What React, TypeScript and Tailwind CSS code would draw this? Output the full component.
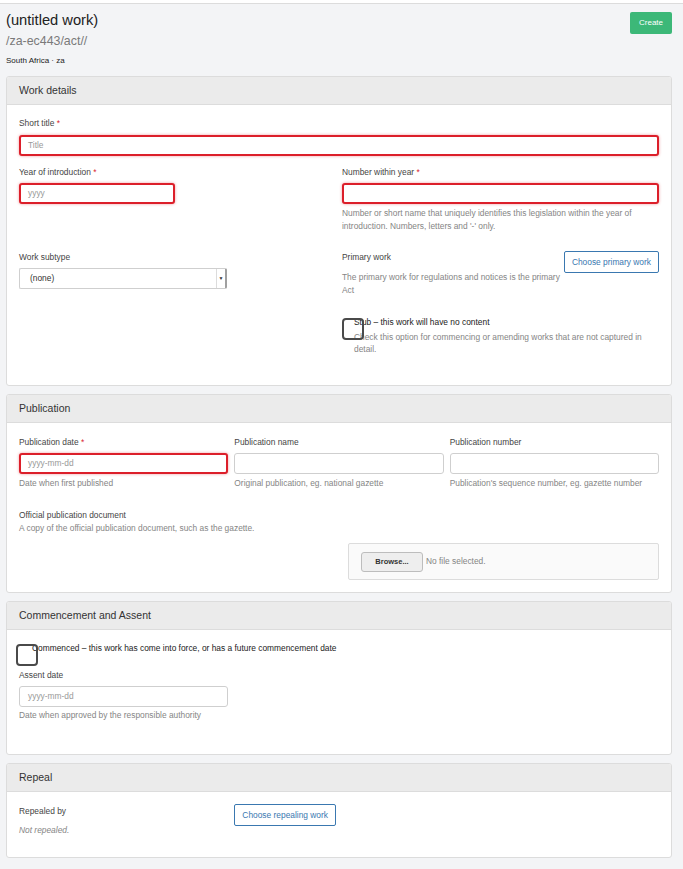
import React from "react";

const Req = () => <span className="text-[#d9232d]"> *</span>;

const Label = ({ children }: { children: React.ReactNode }) => (
  <div className="text-[8.4px] leading-[11px] text-[#444]">{children}</div>
);

const Help = ({ children }: { children: React.ReactNode }) => (
  <div className="text-[8.4px] leading-[13px] text-[#858585]">{children}</div>
);

const ErrInput = ({ placeholder, className = "" }: { placeholder?: string; className?: string }) => (
  <div
    className={`h-[21px] rounded-[3px] border-2 border-[#dc1f2a] bg-white shadow-[0_0_3px_rgba(220,30,40,0.45)] px-[7px] flex items-center text-[8.4px] text-[#999] ${className}`}
  >
    {placeholder}
  </div>
);

const Input = ({ placeholder, className = "" }: { placeholder?: string; className?: string }) => (
  <div
    className={`h-[21px] rounded-[3px] border border-[#cfcfcf] bg-white px-[8px] flex items-center text-[8.4px] text-[#999] ${className}`}
  >
    {placeholder}
  </div>
);

const Box = () => (
  <div className="absolute w-[22px] h-[22px] rounded-[4px] border-2 border-[#4a4a4a] bg-transparent" />
);

const Card = ({ title, children, className = "" }: { title: string; children: React.ReactNode; className?: string }) => (
  <div className="ml-[6px] mr-[11px] mb-[8px] rounded-[3px] border border-[#dcdcdc] bg-white overflow-hidden">
    <div className="h-[28px] bg-[#ebebeb] border-b border-[#dcdcdc] flex items-center px-[12px] text-[10.5px] text-[#333]">
      {title}
    </div>
    <div className={`px-[12px] ${className}`}>{children}</div>
  </div>
);

export default function App() {
  return (
    <div className="min-h-[869px] bg-[#f3f4f6] font-['Liberation_Sans',Arial,sans-serif] text-[#222]">
      <div className="h-[4px] bg-white border-b border-[#dcdcdc]" />

      <div className="flex justify-between pl-[6px] pr-[11px] pt-[7px] h-[72px]">
        <div>
          <div className="text-[14.7px] leading-[18px] text-[#222]">(untitled work)</div>
          <div className="mt-[5px] text-[12.4px] leading-[15px] text-[#7a7a7a]">/za-ec443/act//</div>
          <div className="mt-[7px] text-[8px] leading-[10px] text-[#222]">South Africa · za</div>
        </div>
        <div className="mt-[1px]">
          <div className="h-[22px] w-[42px] rounded-[2px] bg-[#3cb878] text-white text-[8px] flex items-center justify-center">
            Create
          </div>
        </div>
      </div>

      <Card title="Work details" className="pt-[13px] pb-[30px]">
        <Label>
          Short title<Req />
        </Label>
        <ErrInput placeholder="Title" className="mt-[6px]" />

        <div className="grid grid-cols-2 gap-x-[6px] mt-[11px]">
          <div>
            <Label>
              Year of introduction<Req />
            </Label>
            <ErrInput placeholder="yyyy" className="mt-[5px] w-[156px]" />
          </div>
          <div>
            <Label>
              Number within year<Req />
            </Label>
            <ErrInput className="mt-[5px]" />
            <div className="mt-[3px]">
              <Help>
                Number or short name that uniquely identifies this legislation within the year of introduction. Numbers,
                letters and '-' only.
              </Help>
            </div>
          </div>

          <div className="mt-[19px]">
            <Label>Work subtype</Label>
            <div className="mt-[5px] w-[208px] h-[21px] rounded-[2px] border border-[#cfcfcf] border-r-2 border-r-[#a0a0a0] bg-white flex items-center">
              <span className="flex-1 pl-[10px] text-[8.4px] text-[#333]">(none)</span>
              <span className="w-[9px] h-full border-l border-[#dcdcdc] flex items-center justify-center text-[5px] text-[#333]">
                ▼
              </span>
            </div>
          </div>
          <div className="mt-[18px]">
            <div className="flex justify-between">
              <div className="w-[221px] pt-[1px]">
                <Label>Primary work</Label>
                <div className="mt-[8px]">
                  <Help>The primary work for regulations and notices is the primary Act</Help>
                </div>
              </div>
              <div className="shrink-0 whitespace-nowrap h-[22px] px-[7px] rounded-[2px] border border-[#3a78b0] text-[#3a78b0] text-[8.4px] flex items-center">
                Choose primary work
              </div>
            </div>
            <div className="relative mt-[20px] pl-[12px]">
              <div className="absolute left-0 top-[1px]">
                <Box />
              </div>
              <div className="text-[8.4px] leading-[11px] text-[#222]">Stub – this work will have no content</div>
              <div className="mt-[3px] text-[8.4px] leading-[12px] text-[#858585]">
                Check this option for commencing or amending works that are not captured in detail.
              </div>
            </div>
          </div>
        </div>
      </Card>

      <Card title="Publication" className="pt-[14px] pb-[12px]">
        <div className="grid grid-cols-3 gap-x-[6px]">
          <div>
            <Label>
              Publication date<Req />
            </Label>
            <ErrInput placeholder="yyyy-mm-dd" className="mt-[5px]" />
            <div className="mt-[3px] text-[8.4px] leading-[12px] text-[#858585]">Date when first published</div>
          </div>
          <div>
            <Label>Publication name</Label>
            <Input className="mt-[5px]" />
            <div className="mt-[3px] text-[8.4px] leading-[12px] text-[#858585]">Original publication, eg. national gazette</div>
          </div>
          <div>
            <Label>Publication number</Label>
            <Input className="mt-[5px]" />
            <div className="mt-[3px] text-[8.4px] leading-[12px] text-[#858585]">
              Publication's sequence number, eg. gazette number
            </div>
          </div>
        </div>
        <div className="mt-[21px]">
          <Label>Official publication document</Label>
          <div className="mt-[1px] text-[8.4px] leading-[12px] text-[#858585]">
            A copy of the official publication document, such as the gazette.
          </div>
        </div>
        <div className="flex justify-end mt-[9px]">
          <div className="w-[311px] h-[37px] rounded-[2px] border border-[#dcdcdc] bg-[#fafafa] flex items-center px-[12px]">
            <div className="h-[20px] w-[62px] rounded-[3px] border border-[#bdbdbd] bg-[#eeeeee] text-[7.5px] font-bold text-[#333] flex items-center justify-center">
              Browse...
            </div>
            <span className="ml-[3px] text-[8.4px] text-[#858585]">No file selected.</span>
          </div>
        </div>
      </Card>

      <Card title="Commencement and Assent" className="pt-[13px] pb-[33px]">
        <div className="relative pl-[13px]">
          <div className="absolute left-[-3px] top-[1px]">
            <Box />
          </div>
          <div className="text-[8.4px] leading-[11px] text-[#222]">
            Commenced – this work has come into force, or has a future commencement date
          </div>
        </div>
        <div className="mt-[16px]">
          <Label>Assent date</Label>
          <Input placeholder="yyyy-mm-dd" className="mt-[5px] w-[209px]" />
          <div className="mt-[2px] text-[8.4px] leading-[12px] text-[#858585]">
            Date when approved by the responsible authority
          </div>
        </div>
      </Card>

      <Card title="Repeal" className="pt-[12px] pb-[21px]">
        <div className="grid grid-cols-3 gap-x-[6px]">
          <div className="pt-[2px]">
            <Label>Repealed by</Label>
            <div className="mt-[8px] text-[8.4px] leading-[11px] italic text-[#858585]">Not repealed.</div>
          </div>
          <div className="-mt-[3px]">
            <div className="inline-flex h-[22px] px-[7px] rounded-[2px] border border-[#3a78b0] text-[#3a78b0] text-[8.4px] items-center">
              Choose repealing work
            </div>
          </div>
        </div>
      </Card>
    </div>
  );
}
